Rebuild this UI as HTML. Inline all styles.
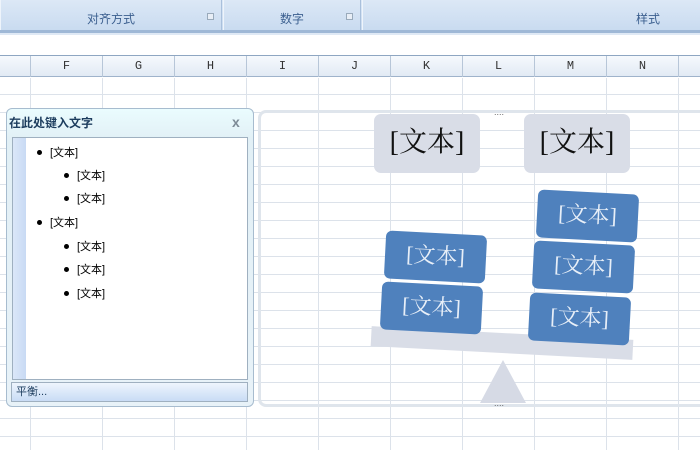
<!DOCTYPE html>
<html><head><meta charset="utf-8"><style>
*{margin:0;padding:0;box-sizing:border-box}
body{width:700px;height:450px;overflow:hidden;background:#fff;position:relative;font-family:"Liberation Sans","Noto Sans CJK SC",sans-serif}
.abs{position:absolute}
.rib{left:0;top:0;width:700px;height:30px;background:linear-gradient(#dce8f6,#c9dbf0)}
.grp{top:0;height:30px;border-right:1px solid #a9c0dc;border-left:1px solid #eef4fb;font-size:12px;color:#3b5f8f;text-align:center;line-height:38px}
.hdr{left:0;top:55px;width:700px;height:22px;background:linear-gradient(#f6f9fd,#e2eaf4);border-top:1px solid #8ea6c2;border-bottom:1px solid #9fb3cb}
.hcol{top:0;height:21px;width:72px;border-right:1px solid #b7c6d8;text-align:center;font-family:"Liberation Mono",monospace;font-size:12px;line-height:21px;color:#333}
.blue{background:#4f81bd;color:#e8eff8;border-radius:6px;font-family:"Liberation Serif","Noto Serif CJK SC",serif;font-size:22px;text-align:center}
.gray{background:#d9dde7;color:#111;border-radius:7px;font-family:"Liberation Serif","Noto Serif CJK SC",serif;font-size:28px;text-align:center}
.li{font-size:11px;color:#000;font-family:"Liberation Sans","Noto Sans CJK SC",sans-serif}
.li b{display:inline-block;width:5px;height:5px;border-radius:50%;background:#000;vertical-align:middle;margin-right:8px;margin-top:-2px}
</style></head><body>
<div class="abs rib"></div>
<div class="abs grp" style="left:0;width:222px">对齐方式</div>
<div class="abs grp" style="left:223px;width:138px">数字</div>
<div class="abs grp" style="left:362px;width:338px;text-align:right;padding-right:40px;border-right:none">样式</div>
<div class="abs" style="left:207px;top:13px;width:7px;height:7px;border:1px solid #9ab;background:#e8eef6"></div>
<div class="abs" style="left:346px;top:13px;width:7px;height:7px;border:1px solid #9ab;background:#e8eef6"></div>
<div class="abs" style="left:0;top:30px;width:700px;height:3px;background:#9fb8d6"></div>
<div class="abs" style="left:0;top:33px;width:700px;height:2px;background:#dfe9f5"></div>
<div class="abs hdr">
<div class="abs hcol" style="left:0;width:31px"></div>
<div class="abs hcol" style="left:31px">F</div>
<div class="abs hcol" style="left:103px">G</div>
<div class="abs hcol" style="left:175px">H</div>
<div class="abs hcol" style="left:247px">I</div>
<div class="abs hcol" style="left:319px">J</div>
<div class="abs hcol" style="left:391px">K</div>
<div class="abs hcol" style="left:463px">L</div>
<div class="abs hcol" style="left:535px">M</div>
<div class="abs hcol" style="left:607px">N</div>
</div>
<svg class="abs" style="left:0;top:78px" width="700" height="372">
<g stroke="#dce2ea" stroke-width="1">
<line x1="30.5" y1="0" x2="30.5" y2="372"/><line x1="102.5" y1="0" x2="102.5" y2="372"/><line x1="174.5" y1="0" x2="174.5" y2="372"/><line x1="246.5" y1="0" x2="246.5" y2="372"/><line x1="318.5" y1="0" x2="318.5" y2="372"/><line x1="390.5" y1="0" x2="390.5" y2="372"/><line x1="462.5" y1="0" x2="462.5" y2="372"/><line x1="534.5" y1="0" x2="534.5" y2="372"/><line x1="606.5" y1="0" x2="606.5" y2="372"/><line x1="678.5" y1="0" x2="678.5" y2="372"/>
<line x1="0" y1="16.5" x2="700" y2="16.5"/><line x1="0" y1="34.5" x2="700" y2="34.5"/><line x1="0" y1="52.5" x2="700" y2="52.5"/><line x1="0" y1="70.5" x2="700" y2="70.5"/><line x1="0" y1="88.5" x2="700" y2="88.5"/><line x1="0" y1="106.5" x2="700" y2="106.5"/><line x1="0" y1="124.5" x2="700" y2="124.5"/><line x1="0" y1="142.5" x2="700" y2="142.5"/><line x1="0" y1="160.5" x2="700" y2="160.5"/><line x1="0" y1="178.5" x2="700" y2="178.5"/><line x1="0" y1="196.5" x2="700" y2="196.5"/><line x1="0" y1="214.5" x2="700" y2="214.5"/><line x1="0" y1="232.5" x2="700" y2="232.5"/><line x1="0" y1="250.5" x2="700" y2="250.5"/><line x1="0" y1="268.5" x2="700" y2="268.5"/><line x1="0" y1="286.5" x2="700" y2="286.5"/><line x1="0" y1="304.5" x2="700" y2="304.5"/><line x1="0" y1="322.5" x2="700" y2="322.5"/><line x1="0" y1="340.5" x2="700" y2="340.5"/><line x1="0" y1="358.5" x2="700" y2="358.5"/>
</g></svg>
<div class="abs" style="left:258px;top:110px;width:450px;height:297px;border:3px solid #dfe5ec;border-radius:8px"></div>
<div class="abs" style="left:494px;top:107px;font-size:9px;color:#666">....</div>
<div class="abs" style="left:494px;top:398px;font-size:9px;color:#666">....</div>
<div class="abs" style="left:6px;top:108px;width:248px;height:299px;border:1px solid #a7bccf;border-radius:6px;background:linear-gradient(#eafcfe,#e2f0f6 30px,#e8f2f8)"></div>
<div class="abs" style="left:9px;top:114px;font-size:12px;font-weight:bold;color:#1d3d5e">在此处键入文字</div>
<div class="abs" style="left:232px;top:114px;font-size:14px;color:#7d8a96;font-weight:bold">x</div>
<div class="abs" style="left:12px;top:137px;width:236px;height:243px;border:1px solid #9fb0c0;background:#fff"></div>
<div class="abs" style="left:13px;top:138px;width:13px;height:241px;background:linear-gradient(90deg,#dbe7f8,#c8daf4)"></div>
<div class="abs li" style="left:37px;top:144px"><b></b>[文本]</div>
<div class="abs li" style="left:64px;top:167px"><b></b>[文本]</div>
<div class="abs li" style="left:64px;top:190px"><b></b>[文本]</div>
<div class="abs li" style="left:37px;top:214px"><b></b>[文本]</div>
<div class="abs li" style="left:64px;top:238px"><b></b>[文本]</div>
<div class="abs li" style="left:64px;top:261px"><b></b>[文本]</div>
<div class="abs li" style="left:64px;top:285px"><b></b>[文本]</div>
<div class="abs" style="left:11px;top:382px;width:237px;height:20px;border:1px solid #9fb0c0;background:linear-gradient(#eef5fd,#c9dcf5);font-size:11px;color:#1d3d5e;padding-left:4px;line-height:18px">平衡...</div>
<div class="abs gray" style="left:374px;top:114px;width:106px;height:59px;line-height:57px">[文本]</div>
<div class="abs gray" style="left:524px;top:114px;width:106px;height:59px;line-height:57px">[文本]</div>
<div class="abs" style="left:371px;top:333px;width:262px;height:20px;background:#d9dde7;transform:rotate(3deg)"></div>
<svg class="abs" style="left:478px;top:358px" width="52" height="46"><polygon points="25,2 2,45 48,45" fill="#d6dae5"/></svg>
<div class="abs blue" style="left:385px;top:233px;width:101px;height:48px;line-height:46px;transform:rotate(3deg)">[文本]</div>
<div class="abs blue" style="left:381px;top:284px;width:101px;height:48px;line-height:46px;transform:rotate(3deg)">[文本]</div>
<div class="abs blue" style="left:537px;top:192px;width:101px;height:48px;line-height:46px;transform:rotate(3deg)">[文本]</div>
<div class="abs blue" style="left:533px;top:243px;width:101px;height:48px;line-height:46px;transform:rotate(3deg)">[文本]</div>
<div class="abs blue" style="left:529px;top:295px;width:101px;height:48px;line-height:46px;transform:rotate(3deg)">[文本]</div>
</body></html>
